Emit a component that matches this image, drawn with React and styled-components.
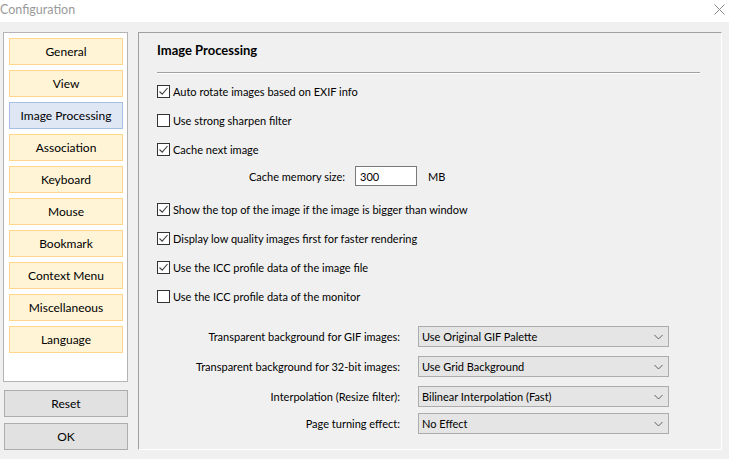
import React from "react";
import styled, { createGlobalStyle } from "styled-components";

const GlobalStyle = createGlobalStyle`
    html, body {
        margin: 0;
        padding: 0;
        background: #f0f0f0;
        width: 729px;
        height: 459px;
        overflow: hidden;
    }
    * {
        box-sizing: border-box;
    }
`;

const pages = [
    "General",
    "View",
    "Image Processing",
    "Association",
    "Keyboard",
    "Mouse",
    "Bookmark",
    "Context Menu",
    "Miscellaneous",
    "Language",
];

const options = [
    { label: "Auto rotate images based on EXIF info", checked: true },
    { label: "Use strong sharpen filter", checked: false },
    { label: "Cache next image", checked: true, cache: true },
    { label: "Show the top of the image if the image is bigger than window", checked: true },
    { label: "Display low quality images first for faster rendering", checked: true },
    { label: "Use the ICC profile data of the image file", checked: true },
    { label: "Use the ICC profile data of the monitor", checked: false },
];

const selects = [
    { label: "Transparent background for GIF images:", value: "Use Original GIF Palette" },
    { label: "Transparent background for 32-bit images:", value: "Use Grid Background" },
    { label: "Interpolation (Resize filter):", value: "Bilinear Interpolation (Fast)" },
    { label: "Page turning effect:", value: "No Effect", tight: true },
];

function CheckBox({ checked }) {
    return (
        <Box>
            {checked && (
                <svg width="11" height="11" viewBox="0 0 11 11">
                    <path d="M1.5 5.5 L4.2 8.2 L9.5 2" fill="none" stroke="#404040" strokeWidth="1.1" />
                </svg>
            )}
        </Box>
    );
}

function Chevron() {
    return (
        <svg width="9" height="6" viewBox="0 0 9 6">
            <path d="M0.5 1 L4.5 5 L8.5 1" fill="none" stroke="#606060" strokeWidth="1" />
        </svg>
    );
}

export default function App() {
    return (
        <>
            <GlobalStyle />
            <Window>
                <TitleBar>
                    <Title>Configuration</Title>
                    <Close>
                        <svg width="11" height="11" viewBox="0 0 11 11">
                            <path d="M0.5 0.5 L10.5 10.5 M10.5 0.5 L0.5 10.5" stroke="#8a8a8a" strokeWidth="1" />
                        </svg>
                    </Close>
                </TitleBar>
                <Body>
                    <Sidebar>
                        <PageList>
                            {pages.map((p) => (
                                <PageButton key={p} $active={p === "Image Processing"}>
                                    {p}
                                </PageButton>
                            ))}
                        </PageList>
                        <ActionButton>Reset</ActionButton>
                        <ActionButton>OK</ActionButton>
                    </Sidebar>
                    <Panel>
                        <Heading>Image Processing</Heading>
                        <Separator />
                        {options.map((o) => (
                            <React.Fragment key={o.label}>
                                <CheckRow>
                                    <CheckBox checked={o.checked} />
                                    <CheckLabel>{o.label}</CheckLabel>
                                </CheckRow>
                                {o.cache && (
                                    <CacheRow>
                                        <CacheLabel>Cache memory size:</CacheLabel>
                                        <TextInput>300</TextInput>
                                        <Unit>MB</Unit>
                                    </CacheRow>
                                )}
                            </React.Fragment>
                        ))}
                        <SelectGrid>
                            {selects.map((s) => (
                                <SelectRow key={s.label} $tight={s.tight}>
                                    <SelectLabel>{s.label}</SelectLabel>
                                    <Select>
                                        <span>{s.value}</span>
                                        <Chevron />
                                    </Select>
                                </SelectRow>
                            ))}
                        </SelectGrid>
                    </Panel>
                </Body>
            </Window>
        </>
    );
}

const Window = styled.div`
    width: 729px;
    height: 459px;
    background: #f0f0f0;
    font-family: Lato, "Noto Sans", sans-serif;
    font-size: 12px;
    color: #000;
`;
const TitleBar = styled.div`
    height: 22px;
    background: #fff;
    display: flex;
    align-items: center;
    justify-content: space-between;
`;
const Title = styled.div`
    font-size: 12.5px;
    color: #9a9a9a;
    margin-top: -3px;
`;
const Close = styled.div`
    display: flex;
    margin-right: 4px;
    margin-top: -4px;
`;
const Body = styled.div`
    display: flex;
    padding: 10px 0 0 3px;
`;
const Sidebar = styled.div`
    width: 125px;
    display: flex;
    flex-direction: column;
`;
const PageList = styled.div`
    height: 350px;
    background: #fff;
    border: 1px solid #b4b4b4;
    padding: 5px;
    display: flex;
    flex-direction: column;
    gap: 5px;
`;
const PageButton = styled.div`
    height: 27px;
    width: 114px;
    display: flex;
    align-items: center;
    justify-content: center;
    background: ${(p) => (p.$active ? "#dfe7f5" : "#fff4d6")};
    border: 1px solid ${(p) => (p.$active ? "#a8bfe4" : "#ffd68c")};
`;
const ActionButton = styled.div`
    margin: 8px 0 0 1px;
    width: 124px;
    height: 27px;
    display: flex;
    align-items: center;
    justify-content: center;
    background: #e1e1e1;
    border: 1px solid #adadad;
    & + & {
        margin-top: 6px;
    }
`;
const Panel = styled.div`
    margin-left: 10px;
    width: 584px;
    height: 418px;
    border-top: 1px solid #a0a0a0;
    border-left: 1px solid #a0a0a0;
    border-right: 1px solid #fff;
    border-bottom: 1px solid #fff;
    padding: 9px 21px 0 18px;
    font-size: 11px;
`;
const Heading = styled.div`
    font-weight: bold;
    font-size: 13px;
    line-height: 16px;
`;
const Separator = styled.div`
    margin-top: 14px;
    width: 543px;
    border-top: 1px solid #a0a0a0;
    border-bottom: 1px solid #fff;
    margin-bottom: 3px;
`;
const CheckRow = styled.div`
    height: 29px;
    display: flex;
    align-items: center;
`;
const Box = styled.div`
    width: 13px;
    height: 13px;
    border: 1px solid #333;
    background: #fff;
    display: flex;
    align-items: center;
    justify-content: center;
    margin-right: 3px;
`;
const CheckLabel = styled.span``;
const CacheRow = styled.div`
    height: 24px;
    margin-bottom: 7px;
    display: grid;
    grid-template-columns: 188px 62px auto;
    column-gap: 10px;
    align-items: center;
`;
const CacheLabel = styled.span`
    text-align: right;
`;
const TextInput = styled.div`
    width: 62px;
    height: 20px;
    background: #fff;
    border: 1px solid #7a7a7a;
    padding-left: 4px;
    display: flex;
    align-items: center;
`;
const Unit = styled.span`
    margin-left: 1px;
`;
const SelectGrid = styled.div`
    margin-top: 15px;
    display: flex;
    flex-direction: column;
`;
const SelectRow = styled.div`
    display: grid;
    grid-template-columns: 243px 251px;
    column-gap: 18px;
    align-items: center;
    margin-top: ${(p) => (p.$tight ? "6px" : "9px")};
    &:first-child {
        margin-top: 0;
    }
`;
const SelectLabel = styled.span`
    text-align: right;
    white-space: nowrap;
`;
const Select = styled.div`
    height: 21px;
    background: #e5e5e5;
    border: 1px solid #acacac;
    display: flex;
    align-items: center;
    justify-content: space-between;
    padding: 0 5px 0 3px;
`;
